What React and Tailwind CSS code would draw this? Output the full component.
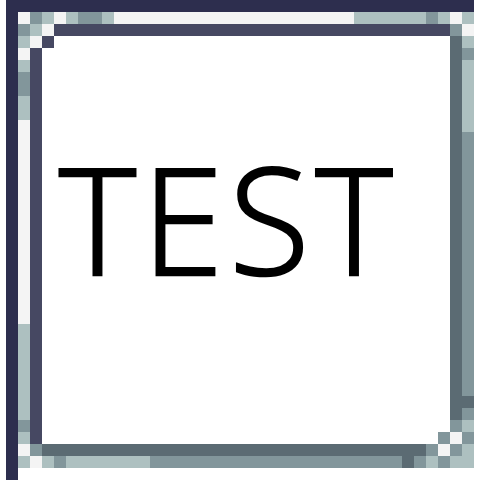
const N = "#2d2e4e";
const D = "#464862";
const W = "#f4f4f4";
const L = "#adc0c0";
const G = "#82969b";
const S = "#5b6b73";

// [col, row, w, h, colour] in 12px cells
const cells = [
  // outer navy edge
  [0, 0, 39, 1, N],
  [0, 0, 1, 40, N],
  // row 1
  [1, 1, 1, 1, W], [2, 1, 1, 1, G], [3, 1, 1, 1, L], [4, 1, 1, 1, W],
  [5, 1, 1, 1, L], [6, 1, 2, 1, G], [8, 1, 1, 1, L], [9, 1, 20, 1, W],
  [29, 1, 6, 1, L], [35, 1, 1, 1, G], [36, 1, 1, 1, L], [37, 1, 1, 1, W],
  [38, 1, 1, 1, L],
  // row 2
  [1, 2, 1, 1, G], [2, 2, 1, 1, L], [3, 2, 1, 1, W], [4, 2, 33, 1, D],
  [37, 2, 1, 1, G], [38, 2, 1, 1, W],
  // row 3
  [1, 3, 1, 1, L], [2, 3, 1, 1, W], [3, 3, 1, 1, D], [38, 3, 1, 1, L],
  // inner dark edges
  [2, 4, 1, 33, D],
  [37, 3, 1, 32, S],
  // left light column
  [1, 4, 1, 1, W], [1, 5, 1, 1, L], [1, 6, 1, 2, G], [1, 8, 1, 2, L],
  [1, 10, 1, 17, W], [1, 27, 1, 8, L], [1, 35, 1, 1, G], [1, 36, 1, 1, L],
  // right column
  [38, 4, 1, 1, G], [38, 5, 1, 6, L], [38, 11, 1, 22, G], [38, 33, 1, 1, S],
  [38, 34, 1, 1, G], [38, 35, 1, 1, L], [38, 36, 1, 1, G],
  // bottom right corner
  [37, 35, 1, 1, G], [37, 36, 1, 1, W], [36, 36, 1, 1, G],
  // row 37
  [1, 37, 1, 1, W], [2, 37, 1, 1, G], [3, 37, 32, 1, S], [35, 37, 1, 1, G],
  [36, 37, 1, 1, W], [37, 37, 1, 1, G], [38, 37, 1, 1, L],
  // row 38
  [1, 38, 1, 1, L], [2, 38, 1, 1, W], [3, 38, 1, 1, L], [4, 38, 1, 1, G],
  [5, 38, 7, 1, L], [12, 38, 21, 1, G], [33, 38, 1, 1, S], [34, 38, 1, 1, G],
  [35, 38, 1, 1, L], [36, 38, 1, 1, G], [37, 38, 2, 1, L],
];

function PixelFrame() {
  return (
    <svg
      className="absolute inset-0"
      width="480"
      height="480"
      viewBox="-0.5 0 40 40"
      shapeRendering="crispEdges"
    >
      {cells.map(([x, y, w, h, c], i) => (
        <rect key={i} x={x} y={y} width={w} height={h} fill={c} />
      ))}
    </svg>
  );
}

export default function App() {
  return (
    <div className="relative w-[480px] h-[480px] bg-white overflow-hidden">
      <PixelFrame />
      <div className="relative flex items-start pt-[145px] pl-[59px]">
        <span
          className="text-black text-[147px] font-light leading-none tracking-[6px] [-webkit-text-stroke:2.5px_black]"
          style={{ fontFamily: '"Open Sans", "Noto Sans", sans-serif' }}
        >
          TEST
        </span>
      </div>
    </div>
  );
}
